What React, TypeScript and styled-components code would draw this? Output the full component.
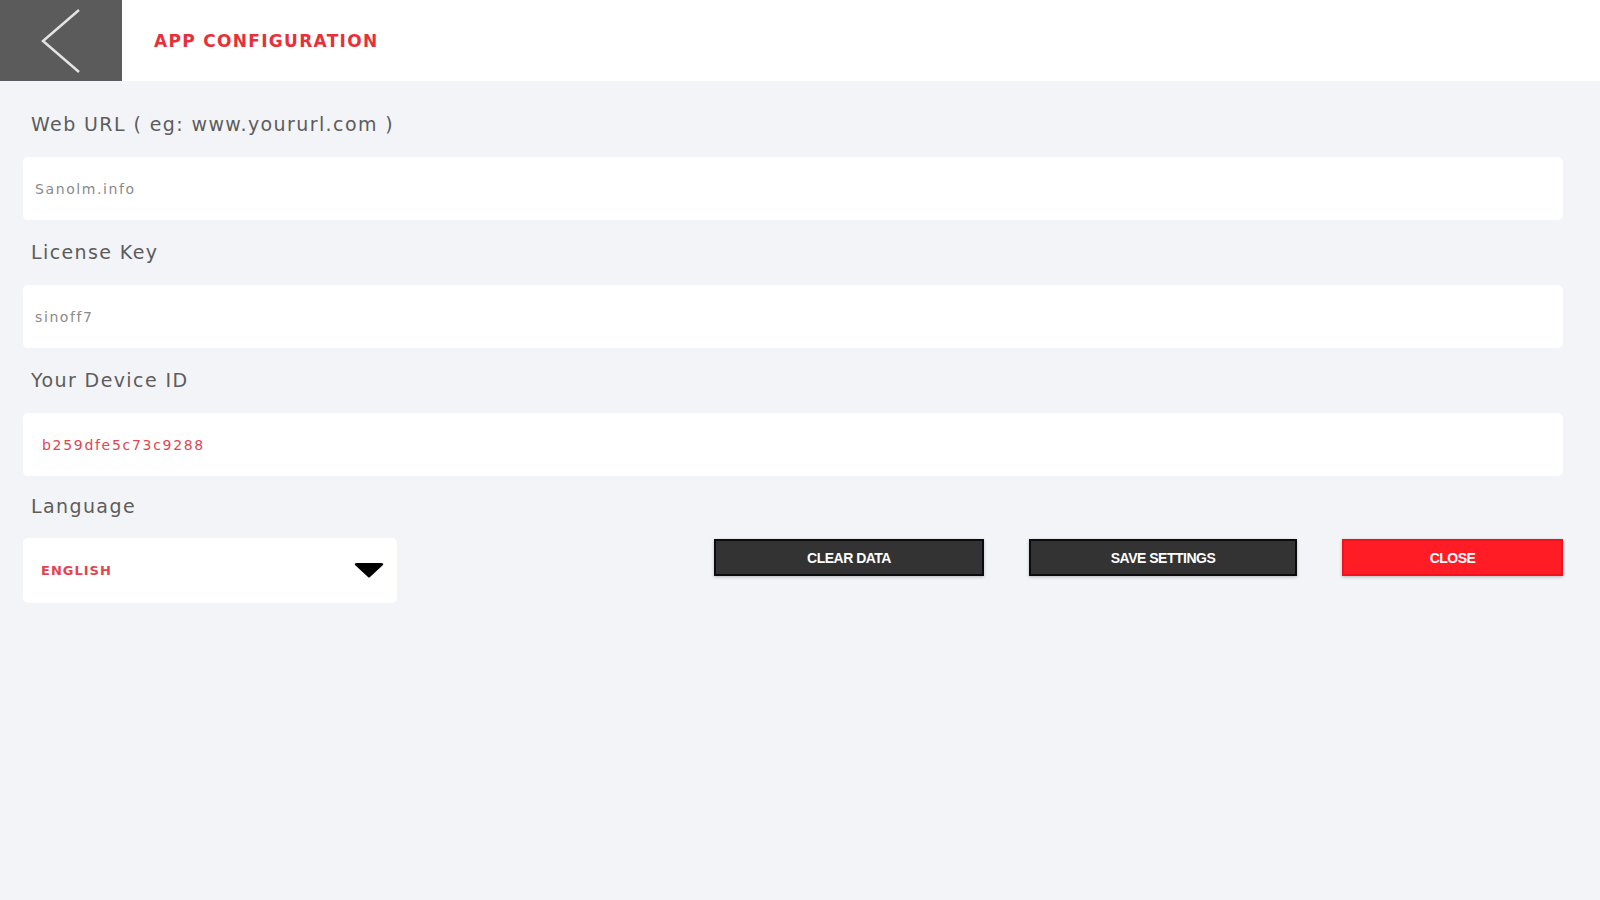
import styled, { createGlobalStyle } from 'styled-components';

const GlobalStyle = createGlobalStyle`
  html, body {
    margin: 0;
    padding: 0;
    background: #f3f4f8;
    font-family: 'DejaVu Sans', 'Liberation Sans', sans-serif;
  }
`;

const Page = styled.div`
  width: 1600px;
  height: 900px;
  background: #f3f4f8;
  display: flex;
  flex-direction: column;
`;

const Header = styled.header`
  height: 81px;
  background: #ffffff;
  display: flex;
  align-items: center;
`;

const BackButton = styled.button`
  width: 122px;
  height: 81px;
  border: none;
  padding: 0;
  background: #5b5b5b;
  display: flex;
  align-items: center;
  justify-content: center;
  cursor: pointer;
`;

const Title = styled.h1`
  margin: 0 0 0 32px;
  font-family: 'DejaVu Sans', sans-serif;
  font-size: 17px;
  font-weight: 600;
  letter-spacing: 1.3px;
  color: #e8303a;
`;

const Content = styled.main`
  padding: 11px 37px 0 23px;
  display: flex;
  flex-direction: column;
`;

const Label = styled.div<{ tight?: boolean }>`
  height: ${({ tight }) => (tight ? 62 : 65)}px;
  display: flex;
  align-items: center;
  padding-left: 8px;
  padding-bottom: 2px;
  box-sizing: border-box;
  font-size: 19px;
  letter-spacing: 1.4px;
  color: #5c5c5c;
`;

const Field = styled.div<{ accent?: boolean; inset?: number }>`
  height: 63px;
  background: #ffffff;
  border-radius: 5px;
  display: flex;
  align-items: center;
  padding-left: ${({ inset }) => inset ?? 12}px;
  font-size: 14px;
  letter-spacing: ${({ accent }) => (accent ? 1.7 : 1.6)}px;
  color: ${({ accent }) => (accent ? '#e24450' : '#8a8a8a')};
`;

const BottomRow = styled.div`
  display: flex;
  justify-content: space-between;
  align-items: flex-start;
`;

const Select = styled.div`
  width: 374px;
  height: 65px;
  box-sizing: border-box;
  background: #ffffff;
  border-radius: 5px;
  display: flex;
  align-items: center;
  justify-content: space-between;
  padding: 0 13px 0 18px;
  font-size: 13px;
  font-weight: 700;
  letter-spacing: 1px;
  color: #e24450;
`;

const Actions = styled.div`
  display: flex;
  gap: 45px;
  margin-top: 1px;
`;

const ActionButton = styled.button<{ danger?: boolean; w: number }>`
  width: ${({ w }) => w}px;
  height: 37px;
  box-sizing: border-box;
  border: 2px solid ${({ danger }) => (danger ? '#f0121c' : '#0c0c0c')};
  background: ${({ danger }) => (danger ? '#ff1c24' : '#333333')};
  color: #ffffff;
  font-family: 'Liberation Sans', Arial, sans-serif;
  font-size: 14px;
  font-weight: 700;
  letter-spacing: -0.5px;
  text-transform: uppercase;
  box-shadow: 0 1px 3px rgba(0, 0, 0, 0.25);
  cursor: pointer;
`;

export default function App() {
  return (
    <>
      <GlobalStyle />
      <Page>
        <Header>
          <BackButton aria-label="Back">
            <svg width="122" height="81" viewBox="0 0 122 81">
              <polyline
                points="79,10 43,41 79,72"
                fill="none"
                stroke="#e4e4e4"
                strokeWidth="2.5"
              />
            </svg>
          </BackButton>
          <Title>APP CONFIGURATION</Title>
        </Header>
        <Content>
          <Label>Web URL ( eg: www.yoururl.com )</Label>
          <Field>Sanolm.info</Field>
          <Label>License Key</Label>
          <Field>sinoff7</Field>
          <Label>Your Device ID</Label>
          <Field accent inset={19}>
            b259dfe5c73c9288
          </Field>
          <Label tight>Language</Label>
          <BottomRow>
            <Select>
              ENGLISH
              <svg width="30" height="16" viewBox="0 0 30 16">
                <path d="M1 2 Q0 0 3 0 L27 0 Q30 0 29 2 L16 14 Q15 15 14 14 Z" fill="#000" />
              </svg>
            </Select>
            <Actions>
              <ActionButton w={270}>Clear Data</ActionButton>
              <ActionButton w={268}>Save Settings</ActionButton>
              <ActionButton danger w={221}>
                Close
              </ActionButton>
            </Actions>
          </BottomRow>
        </Content>
      </Page>
    </>
  );
}
